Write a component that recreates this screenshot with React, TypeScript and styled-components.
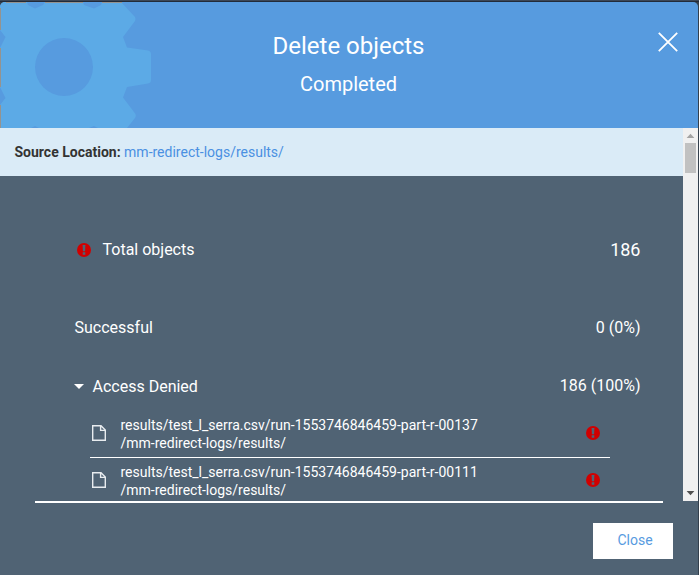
import React from 'react';
import styled, { createGlobalStyle } from 'styled-components';

const Global = createGlobalStyle`
  *, *::before, *::after { box-sizing: border-box; }
  body { margin: 0; background: #33404d; font-family: Roboto, sans-serif; overflow: hidden; }
`;

const Page = styled.div`
  width: 699px;
  height: 575px;
  padding: 2px 1px 0 0;
  background: linear-gradient(#3c4757 1px, #222b3a 1px, #222b3a 2px, #34404d 2px);
`;

const Dialog = styled.section`
  display: flex;
  flex-direction: column;
  height: 573px;
  background: #506374;
  border-radius: 5px 5px 0 0;
  overflow: hidden;
  color: #fff;
`;

const Header = styled.header`
  position: relative;
  flex: 0 0 126px;
  padding-right: 1px;
  background: #579bdf;
  text-align: center;
`;

const GearArt = styled.svg`
  position: absolute;
  left: 0;
  top: 0;
`;

const Title = styled.h1`
  position: relative;
  margin: 0;
  padding-top: 28px;
  font-size: 24px;
  line-height: 32px;
  font-weight: 400;
`;

const Status = styled.p`
  position: relative;
  margin: 8px 0 0;
  font-size: 20px;
  line-height: 28px;
`;

const CloseIcon = styled.button`
  position: absolute;
  top: 30px;
  right: 20px;
  width: 20px;
  height: 20px;
  padding: 0;
  border: 0;
  background: none;
  color: #fff;
  svg { display: block; }
`;

const Body = styled.div`
  display: flex;
  flex: 0 0 373px;
  overflow: hidden;
`;

const Content = styled.main`
  flex: 1;
  overflow: hidden;
`;

const Source = styled.div`
  height: 48px;
  padding-left: 14.5px;
  background: #daebf7;
  color: #333;
  font-size: 14px;
  line-height: 48px;
`;

const SourceLink = styled.a`
  color: #4a90e2;
`;

const SummaryRow = styled.div<{ $height: number; $offset: number }>`
  display: flex;
  align-items: center;
  height: ${(p) => p.$height}px;
  margin: ${(p) => p.$offset}px 42.5px 0 74.5px;
  font-size: 16px;
`;

const Label = styled.span<{ $gap?: number }>`
  flex: 1;
  margin-left: ${(p) => p.$gap ?? 0}px;
`;

const TotalLabel = styled.span`
  display: flex;
  align-items: center;
  gap: 11.5px;
  padding-left: 2.5px;
  svg { margin-top: 2px; }
`;

const Value = styled.span<{ $large?: boolean; $raised?: boolean }>`
  font-size: ${(p) => (p.$large ? 18 : 16)}px;
  padding-bottom: ${(p) => (p.$raised ? 2 : 0)}px;
`;

const Caret = styled.span`
  width: 10px;
  height: 5px;
  margin-left: -0.5px;
  border: 5px solid transparent;
  border-top-color: #fff;
  border-bottom: 0;
`;

const List = styled.ul`
  list-style: none;
  margin: 13px 73px 0 90px;
  padding: 0;
`;

const Item = styled.li`
  display: flex;
  align-items: center;
  height: 47px;
  padding: 0 10px 0 2px;
  border-bottom: 1px solid #fff;
  svg { margin-bottom: 2px; }
`;

const Path = styled.div`
  flex: 1;
  margin-left: 14.5px;
  font-size: 14px;
  line-height: 18px;
  padding-bottom: 1px;
`;

const Scrollbar = styled.div`
  display: flex;
  flex: 0 0 15px;
  flex-direction: column;
  align-items: center;
  justify-content: space-between;
  background: #f0f0f0;
`;

const Arrow = styled.svg`
  display: block;
`;

const Thumb = styled.div`
  width: 11px;
  height: 30px;
  margin-bottom: auto;
  background: #c1c1c1;
`;

const Footer = styled.footer`
  flex: 1;
  display: flex;
  justify-content: flex-end;
  align-items: flex-start;
  margin: 0 35px;
  border-top: 2px solid #fff;
`;

const CloseButton = styled.button`
  width: 80px;
  height: 36px;
  margin: 20px -10px 0 0;
  padding: 0 0 2px 4px;
  border: 0;
  background: #fff;
  color: #579bdf;
  font: 14px/34px Roboto, sans-serif;
`;

const ErrorIcon = () => (
  <svg width="14" height="14" viewBox="0 0 14 14">
    <circle cx="7" cy="7" r="7" fill="#d10000" />
    <path d="M5.6 2h2.8l-.3 6.3H5.9zM5.7 9.3h2.6v2.4H5.7z" fill="#506374" />
  </svg>
);

const FileIcon = () => (
  <svg width="14" height="16" viewBox="0 0 14 16" fill="none" stroke="#e8ecef" strokeWidth="1.4">
    <path d="M.7.7h8.3l4.3 4.3v10.3H.7zM8.6.7v4.7h4.7" />
  </svg>
);

const Gear = () => (
  <GearArt width="160" height="126" viewBox="0 2 160 126">
    <path
      fill="#5caae6"
      d="M0 2H27L28 5 35 8.5 43 5 45 2H83L84 5 94 8.5 101 5 102 2H121L135 17Q136 19 135 21L123 37 127 47.5 148 50.5Q151 51 151 54V80Q151 83 148 83.5L127 87 123 97.5 135.5 114Q136.5 116 135 118L127 128H98L94 126 89 128H39L35 126 31 128H0V105L5.5 98 0 87V48L5.5 37 0 30Z"
    />
    <circle cx="64" cy="67" r="29" fill="#579bdf" />
    <path fill="#95938f" d="M0 8h1v22H0zM0 48h1v39H0zM0 105h1v23H0zM6 2h20v1H6zM45 2h38v1H45zM102 2h20v1h-20z" />
  </GearArt>
);

const files = ['00137', '00111'];

export default function App() {
  return (
    <Page>
      <Global />
      <Dialog role="dialog">
        <Header>
          <Gear />
          <Title>Delete objects</Title>
          <Status>Completed</Status>
          <CloseIcon aria-label="Close dialog">
            <svg width="20" height="20" viewBox="0 0 20 20" stroke="currentColor" strokeWidth="1.8">
              <path d="M.8.8l18.4 18.4M19.2.8L.8 19.2" />
            </svg>
          </CloseIcon>
        </Header>
        <Body>
          <Content>
            <Source>
              <b>Source Location:</b> <SourceLink>mm-redirect-logs/results/</SourceLink>
            </Source>
            <SummaryRow $height={28} $offset={59}>
              <Label>
                <TotalLabel>
                  <ErrorIcon />
                  Total objects
                </TotalLabel>
              </Label>
              <Value $large>186</Value>
            </SummaryRow>
            <SummaryRow $height={24} $offset={52}>
              <Label>Successful</Label>
              <Value>0 (0%)</Value>
            </SummaryRow>
            <SummaryRow $height={24} $offset={35}>
              <Caret />
              <Label $gap={8.5}>Access Denied</Label>
              <Value $raised>186 (100%)</Value>
            </SummaryRow>
            <List>
              {files.map((id) => (
                <Item key={id}>
                  <FileIcon />
                  <Path>
                    results/test_l_serra.csv/run-1553746846459-part-r-{id}
                    <br />
                    /mm-redirect-logs/results/
                  </Path>
                  <ErrorIcon />
                </Item>
              ))}
            </List>
          </Content>
          <Scrollbar>
            <Arrow width="15" height="15" viewBox="0 0 15 15">
              <path d="M3.6 10h7.8L7.5 5.8z" fill="#a3a3a3" />
            </Arrow>
            <Thumb />
            <Arrow width="15" height="15" viewBox="0 0 15 15">
              <path d="M3.6 5h7.8L7.5 9.2z" fill="#505050" />
            </Arrow>
          </Scrollbar>
        </Body>
        <Footer>
          <CloseButton>Close</CloseButton>
        </Footer>
      </Dialog>
    </Page>
  );
}
